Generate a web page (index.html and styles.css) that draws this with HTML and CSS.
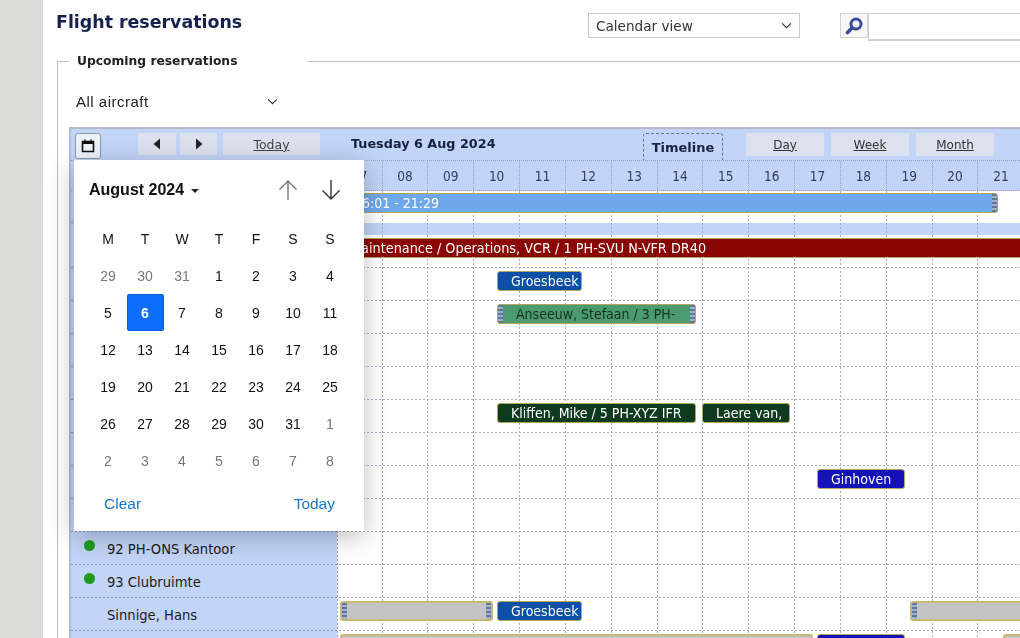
FILE: index.html
```html
<!DOCTYPE html>
<html lang="en">
<head>
<meta charset="utf-8">
<title>Flight reservations</title>
<link rel="stylesheet" href="styles.css">
</head>
<body>
<aside class="side"></aside>
<main class="main">
  <header class="topbar">
    <h1 class="title">Flight reservations</h1>
    <div class="viewselect"><span>Calendar view</span><svg class="chev" viewBox="0 0 12 8"><path d="M1 1.5 6 6.5 11 1.5"/></svg></div>
    <div class="search">
      <span class="searchbtn"><svg viewBox="0 0 18 18" width="18" height="18"><circle cx="11" cy="7" r="5" fill="none" stroke="#3b4a9c" stroke-width="3"/><path d="M7 11 2.500 15.500" stroke="#3b4a9c" stroke-width="3.600" stroke-linecap="round"/></svg></span>
      <span class="searchinput"></span>
    </div>
  </header>
  <fieldset class="group">
    <legend class="legend">Upcoming reservations</legend>
    <div class="filter"><span>All aircraft</span><svg class="chev" viewBox="0 0 12 8"><path d="M1 1.5 6 6.5 11 1.5"/></svg></div>
    <section class="timeline">
      <div class="toolbar">
        <button class="calbtn" type="button"><svg viewBox="0 0 16 16" width="16" height="16"><path d="M2.500 3.500h11v10h-11z" fill="none" stroke="#111" stroke-width="1.600"/><path d="M2.500 3h11v3h-11z" fill="#111"/><path d="M5 1.500v2M11 1.500v2" stroke="#111" stroke-width="1.400"/></svg></button>
        <span class="tool prev"><svg viewBox="0 0 8 12" width="8" height="12"><path d="M7 0.500v11L0.500 6z" fill="#222"/></svg></span>
        <span class="tool next"><svg viewBox="0 0 8 12" width="8" height="12"><path d="M1 0.500v11L7.500 6z" fill="#222"/></svg></span>
        <a class="tool today">Today</a>
        <strong class="date">Tuesday 6 Aug 2024</strong>
        <span class="tab active">Timeline</span>
        <a class="tab">Day</a>
        <a class="tab">Week</a>
        <a class="tab">Month</a>
      </div>
      <div class="hours">
        <span class="corner"></span>
        <span class="h first">07</span><span class="h">08</span><span class="h">09</span><span class="h">10</span><span class="h">11</span><span class="h">12</span><span class="h">13</span><span class="h">14</span><span class="h">15</span><span class="h">16</span><span class="h">17</span><span class="h">18</span><span class="h">19</span><span class="h">20</span><span class="h">21</span>
      </div>
      <div class="rows">
        <div class="vlines"><i class="first"></i><i></i><i></i><i></i><i></i><i></i><i></i><i></i><i></i><i></i><i></i><i></i><i></i><i></i><i></i></div>
        <div class="row short"><div class="label"></div><div class="lane"><div class="ev sky" style="left:10px;width:651px"><span>16:01 - 21:29</span><b class="grip"></b></div></div></div>
        <div class="strip"></div>
        <div class="row"><div class="label"></div><div class="lane"><div class="ev red" style="left:-10px;width:720px"><span>Maintenance / Operations, VCR / 1 PH-SVU N-VFR DR40</span></div></div></div>
        <div class="row"><div class="label"></div><div class="lane"><div class="ev blue" style="left:160px;width:85px"><span>Groesbeek</span></div></div></div>
        <div class="row"><div class="label"></div><div class="lane"><div class="ev green" style="left:160px;width:199px"><b class="grip left"></b><span>Anseeuw, Stefaan / 3 PH-</span><b class="grip"></b></div></div></div>
        <div class="row"><div class="label"></div><div class="lane"></div></div>
        <div class="row"><div class="label"></div><div class="lane"></div></div>
        <div class="row"><div class="label"></div><div class="lane"><div class="ev dark" style="left:160px;width:199px"><span>Kliffen, Mike / 5 PH-XYZ IFR</span></div><div class="ev dark" style="left:365px;width:88px"><span>Laere van,</span></div></div></div>
        <div class="row"><div class="label"></div><div class="lane"></div></div>
        <div class="row"><div class="label"></div><div class="lane"><div class="ev navy" style="left:480px;width:88px"><span>Ginhoven</span></div></div></div>
        <div class="row"><div class="label"></div><div class="lane"></div></div>
        <div class="row"><div class="label"><i class="dot"></i>92 PH-ONS Kantoor</div><div class="lane"></div></div>
        <div class="row"><div class="label"><i class="dot"></i>93 Clubruimte</div><div class="lane"></div></div>
        <div class="row"><div class="label">Sinnige, Hans</div><div class="lane"><div class="ev grey" style="left:3px;width:153px"><b class="grip left"></b><b class="grip"></b></div><div class="ev blue" style="left:160px;width:85px"><span>Groesbeek</span></div><div class="ev grey" style="left:573px;width:200px"><b class="grip left"></b></div></div></div>
        <div class="row"><div class="label"></div><div class="lane"><div class="ev grey" style="left:3px;width:473px"></div><div class="ev navy" style="left:480px;width:88px"></div><div class="ev grey" style="left:666px;width:100px"></div></div></div>
      </div>
      <div class="picker">
        <div class="pickhead">
          <strong class="month">August 2024 <i class="caret"></i></strong>
          <div class="arrows">
            <svg viewBox="0 0 24 24" width="24" height="24" class="up"><path d="M12 22V3M3.500 11.500 12 3l8.500 8.500"/></svg>
            <svg viewBox="0 0 24 24" width="24" height="24" class="down"><path d="M12 2v19M3.500 12.500 12 21l8.500-8.500"/></svg>
          </div>
        </div>
        <div class="days">
          <span class="wd">M</span><span class="wd">T</span><span class="wd">W</span><span class="wd">T</span><span class="wd">F</span><span class="wd">S</span><span class="wd">S</span>
          <span class="mut">29</span><span class="mut">30</span><span class="mut">31</span><span>1</span><span>2</span><span>3</span><span>4</span>
          <span>5</span><span class="sel">6</span><span>7</span><span>8</span><span>9</span><span>10</span><span>11</span>
          <span>12</span><span>13</span><span>14</span><span>15</span><span>16</span><span>17</span><span>18</span>
          <span>19</span><span>20</span><span>21</span><span>22</span><span>23</span><span>24</span><span>25</span>
          <span>26</span><span>27</span><span>28</span><span>29</span><span>30</span><span>31</span><span class="mut">1</span>
          <span class="mut">2</span><span class="mut">3</span><span class="mut">4</span><span class="mut">5</span><span class="mut">6</span><span class="mut">7</span><span class="mut">8</span>
        </div>
        <div class="pickfoot"><a>Clear</a><a>Today</a></div>
      </div>
    </section>
  </fieldset>
</main>
</body>
</html>
```
FILE: styles.css
```css
* { box-sizing: border-box; }
html, body { margin: 0; height: 638px; overflow: hidden; }
body { display: flex; background: #fff; font-family: "DejaVu Sans", sans-serif; color: #222; filter: blur(0.5px); }
.side { flex: 0 0 43px; background: #dcdcda; }
.main { flex: 0 0 977px; width: 977px; padding: 13px 0 0 13px; overflow: hidden; }

.topbar { display: flex; align-items: flex-start; height: 28px; }
.title { flex: 0 0 532px; margin: 0; font-size: 17.400px; line-height: 19px; font-weight: 700; color: #16204f; }
.viewselect { flex: 0 0 212px; height: 25px; display: flex; align-items: center; justify-content: space-between; padding: 0 7px; border: 1px solid #c9c9c9; font-size: 13.600px; color: #333; }
.chev { width: 11px; height: 7px; fill: none; stroke: #333; stroke-width: 1.300; }
.search { display: flex; margin-left: 40px; }
.searchbtn { width: 28px; height: 25px; display: flex; align-items: center; justify-content: center; border: 1px solid #d2d2d2; background: #f7f7f7; }
.searchinput { width: 160px; height: 28px; border: 1px solid #cfcfcf; border-right: 0; border-bottom-width: 2px; }

.group { margin: 13px 0 0 1px; padding: 0 0 0 11px; min-width: 0; border: 0; border-top: 1px solid #bdbdbd; border-left: 1px solid #bdbdbd; }
.legend { padding: 0 71px 0 8px; font-size: 12.300px; font-weight: 700; line-height: 15px; color: #222; }
.filter { width: 202px; height: 32px; margin: 16px 0 10px 7px; display: flex; align-items: center; justify-content: space-between; font-family: "Liberation Sans", sans-serif; font-size: 15px; letter-spacing: .5px; }

.timeline { position: relative; width: 951px; border-top: 2px solid #b4b8c6; border-left: 2px solid #aebbdc; background: #fff; }
.toolbar { display: flex; align-items: flex-start; height: 31px; padding: 4px 0 0 4px; background: #c2d4f8; }
.calbtn { width: 26px; height: 26px; padding: 0; display: flex; align-items: center; justify-content: center; background: #edf1f8; border: 1px solid #8f98a8; border-radius: 3px; }
.tool { height: 22px; display: flex; align-items: center; justify-content: center; background: #dbe2ee; }
.prev { width: 38px; margin-left: 37px; }
.next { width: 37px; margin-left: 4px; }
.today { width: 97px; margin-left: 6px; font-size: 12.500px; color: #444; text-decoration: underline; }
.date { width: 292px; margin-left: 31px; font-size: 12.800px; line-height: 21px; color: #15203f; }
.tab { width: 78px; height: 23px; margin-right: 7px; display: flex; align-items: center; justify-content: center; background: #dbe2ee; font-size: 12px; color: #333; text-decoration: underline; }
.tab.active { width: 80px; height: 27px; margin-right: 23px; background: #c2d4f8; border: 1px dashed #6a7390; border-bottom: 0; border-radius: 3px 3px 0 0; font-weight: 700; font-size: 13px; color: #1a2340; text-decoration: none; }

.hours { display: flex; height: 31px; background: #c2d4f8; border-top: 1px dotted #98a2bc; border-bottom: 1px dotted #98a2bc; }
.corner { flex: 0 0 266px; }
.h { flex: 0 0 45.850px; display: flex; align-items: center; justify-content: center; font-size: 13.500px; color: #33405e; border-left: 1px dotted #98a2bc; font-stretch: condensed; }
.h.first { flex-basis: 44.500px; }

.rows { position: relative; }
.vlines { position: absolute; top: 0; bottom: 0; left: 266px; display: flex; }
.vlines i { flex: 0 0 45.850px; background: repeating-linear-gradient(#a4adc4 0 2px, transparent 2px 4px) left top / 1px 100% no-repeat; }
.vlines i.first { flex-basis: 44.500px; }
.row { display: flex; height: 33px; background: repeating-linear-gradient(90deg, #a4adc4 0 2px, transparent 2px 4px) left bottom / 100% 1px no-repeat; }
.row.short { height: 32px; background: none; }
.strip { height: 12px; background: #c2d4f8; }
.label { position: relative; flex: 0 0 266px; display: flex; align-items: center; padding-left: 36px; background: repeating-linear-gradient(90deg, #8f9ab5 0 2px, #c2d4f8 2px 4px) left bottom / 100% 1px no-repeat, #c2d4f8; font-size: 14.600px; font-stretch: condensed; color: #1b1b1b; }
.dot { position: absolute; left: 13px; top: 8px; width: 11px; height: 11px; border-radius: 50%; background: #1f9a1f; }
.lane { position: relative; flex: 1; }

.ev { position: absolute; top: 3px; height: 20px; display: flex; align-items: center; justify-content: space-between; overflow: hidden; border: 1px solid #b3a75e; border-radius: 3px; font-size: 14px; font-stretch: condensed; color: #fff; white-space: nowrap; }
.ev span { flex: 1; padding-left: 13px; }
.grip { flex: 0 0 5px; height: 100%; background: repeating-linear-gradient(#5d77a0 0 2px, #9fb0c8 2px 4px); }
.sky { top: 2px; background: #6fa8ea; }
.sky span { padding-left: 6px; }
.red { background: #8a0404; border-right: 0; font-size: 14.300px; }
.red span { padding-left: 22px; }
.blue { background: #0c4fa6; }
.green { background: #4c9a72; color: #14331f; }
.dark { background: #0e3a20; }
.navy { background: #1212b8; }
.grey { background: #c4c4c4; border: 2px solid #c8b878; }

.picker { position: absolute; left: 3px; top: 31px; width: 290px; height: 371px; z-index: 5; display: flex; flex-direction: column; background: #fff; box-shadow: 0 6px 24px rgba(0, 0, 0, .26); font-family: "Liberation Sans", sans-serif; font-size: 14px; color: #111; }
.pickhead { display: flex; align-items: center; justify-content: space-between; height: 60px; padding: 0 21px 0 15px; }
.month { font-size: 16px; }
.caret { display: inline-block; margin: 0 0 2px 2px; border: 4px solid transparent; border-top-color: #222; border-bottom: 0; }
.arrows { display: flex; gap: 19px; }
.arrows path { fill: none; stroke-width: 1.400; }
.up { stroke: #777; }
.down { stroke: #333; }
.days { display: grid; grid-template-columns: repeat(7, 37px); grid-auto-rows: 37px; margin: 0 0 0 15.500px; }
.days span { display: flex; align-items: center; justify-content: center; }
.mut { color: #777; }
.days .sel { background: #0d6efd; border: 1px solid #0a58ca; border-radius: 2px; color: #fff; font-weight: 700; }
.pickfoot { display: flex; justify-content: space-between; margin-top: 13px; padding: 0 29px 0 30px; font-size: 15.500px; line-height: 24px; color: #1976d2; }
```
